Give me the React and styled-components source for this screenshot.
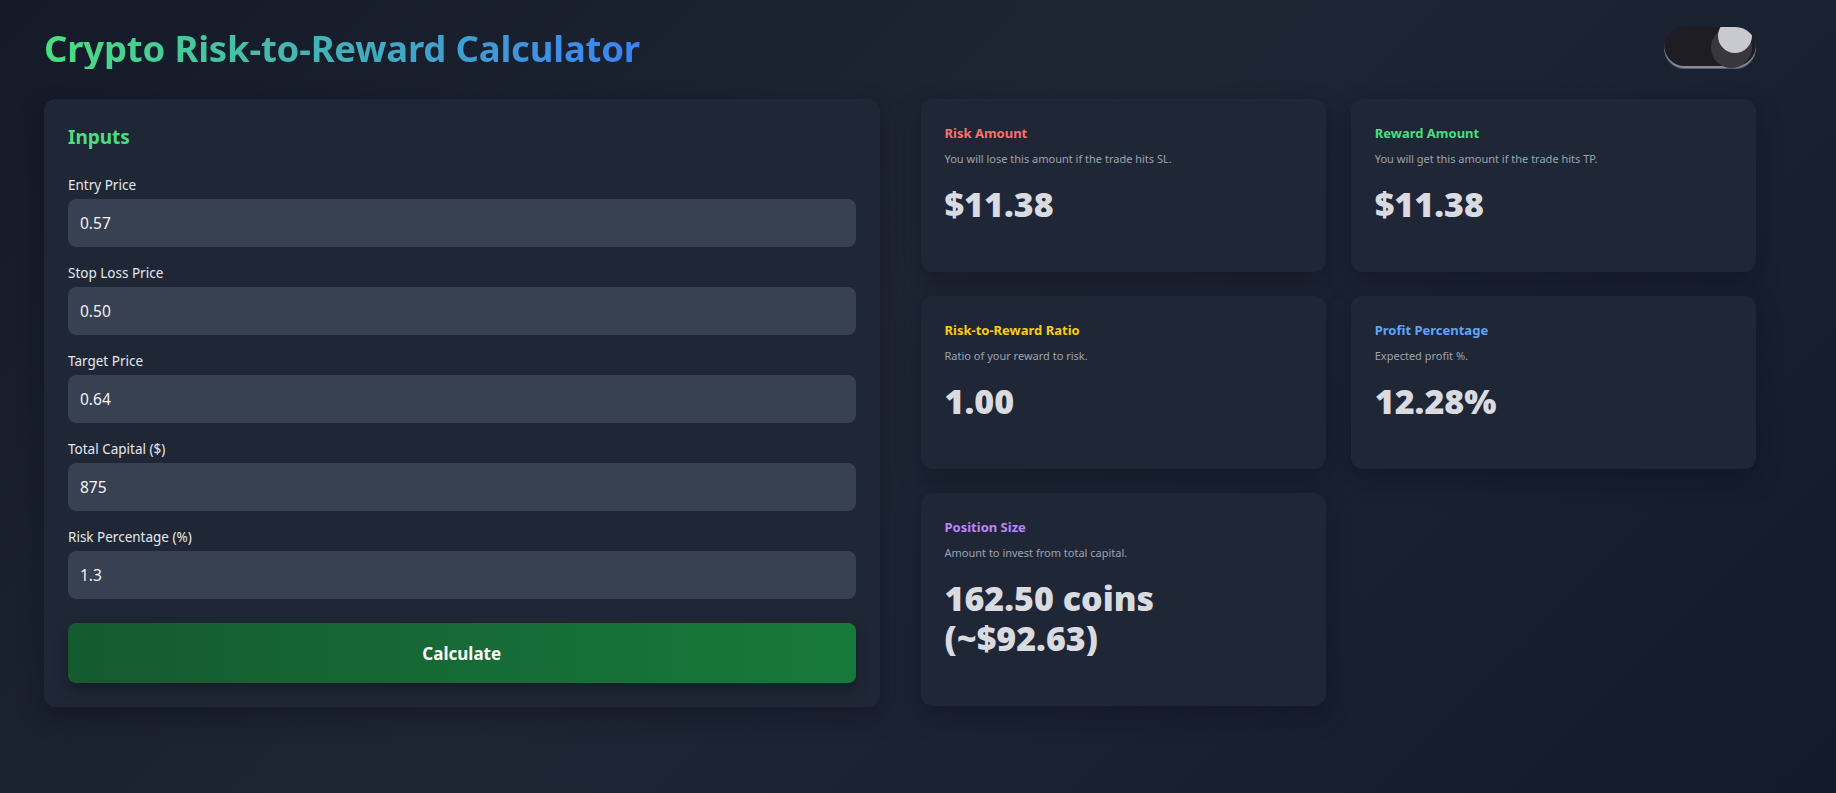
import React, { useState } from 'react';
import styled, { createGlobalStyle } from 'styled-components';

const GlobalStyle = createGlobalStyle`
  * { box-sizing: border-box; }
  body {
    margin: 0;
    font-family: "Noto Sans", "Open Sans", sans-serif;
    background: linear-gradient(135deg, #141a28 0%, #1e2533 45%, #1b2232 65%, #121a2b 100%);
    min-height: 100vh;
    color: #e5e7eb;
  }
`;

const Page = styled.div`
  min-height: 793px;
  padding: 27px 80px 40px 44px;
`;

const Header = styled.header`
  display: flex;
  justify-content: space-between;
  align-items: flex-start;
  margin-bottom: 30px;
`;

const Title = styled.h1`
  margin: 1px 0 0;
  font-size: 36.5px;
  line-height: 41px;
  font-weight: 700;
  background: linear-gradient(90deg, #4ade80 0%, #3b82f6 100%);
  -webkit-background-clip: text;
  background-clip: text;
  color: transparent;
  letter-spacing: -0.2px;
`;

const Toggle = styled.button`
  position: relative;
  width: 92px;
  height: 41px;
  border: none;
  padding: 0;
  border-radius: 999px;
  background: #1f1d24;
  box-shadow: inset 0 -2px 0 #8a8d96, 0 1px 0 #5b5e66;
  cursor: pointer;
  overflow: hidden;
`;

const Halo = styled.span`
  position: absolute;
  top: 0;
  right: ${p => (p.$on ? '4px' : '47px')};
  width: 41px;
  height: 41px;
  border-radius: 50%;
  background: #37373d;
`;

const Knob = styled.span`
  position: absolute;
  top: -8px;
  right: ${p => (p.$on ? '4px' : '54px')};
  width: 34px;
  height: 34px;
  border-radius: 50%;
  background: #c9cacf;
`;

const Main = styled.main`
  display: grid;
  grid-template-columns: 1fr 1fr;
  gap: 41px;
  align-items: start;
`;

const Panel = styled.section`
  background: #1f2736;
  border-radius: 12px;
  padding: 24px;
  box-shadow: 0 10px 25px rgba(8, 12, 22, 0.35);
`;

const PanelTitle = styled.h2`
  margin: 0 0 24px;
  font-size: 19px;
  line-height: 28px;
  font-weight: 700;
  color: #4ade80;
`;

const Field = styled.div`
  display: flex;
  flex-direction: column;
  gap: 4px;
  margin-bottom: 16px;
`;

const Label = styled.label`
  font-size: 13.5px;
  line-height: 20px;
  color: #e5e7eb;
`;

const Input = styled.input`
  height: 48px;
  border: none;
  border-radius: 8px;
  padding: 0 12px;
  background: #374151;
  color: #f3f4f6;
  font-family: inherit;
  font-size: 15.5px;
  outline: none;
`;

const CalcButton = styled.button`
  width: 100%;
  height: 60px;
  margin-top: 8px;
  border: none;
  border-radius: 8px;
  background: linear-gradient(90deg, #155a30 0%, #177a3b 100%);
  color: #ffffff;
  font-family: inherit;
  font-size: 17px;
  font-weight: 700;
  box-shadow: 0 6px 14px rgba(0, 0, 0, 0.3);
  cursor: pointer;
`;

const Results = styled.div`
  display: grid;
  grid-template-columns: 1fr 1fr;
  gap: 24px 25px;
  align-items: start;
`;

const Card = styled.div`
  background: #1f2736;
  border-radius: 12px;
  padding: 24px 24px 48px;
  box-shadow: 0 10px 25px rgba(8, 12, 22, 0.35);
`;

const CardTitle = styled.h3`
  margin: 0 0 8px;
  font-size: 13px;
  line-height: 20px;
  font-weight: 700;
  color: ${p => p.$color};
`;

const CardDesc = styled.p`
  margin: 0 0 17px;
  font-size: 11px;
  line-height: 16px;
  color: #9ca3af;
`;

const CardValue = styled.div`
  font-size: 34px;
  line-height: 40px;
  font-weight: 900;
  color: #d9dbe1;
`;

const fields = [
  { label: 'Entry Price', value: '0.57' },
  { label: 'Stop Loss Price', value: '0.50' },
  { label: 'Target Price', value: '0.64' },
  { label: 'Total Capital ($)', value: '875' },
  { label: 'Risk Percentage (%)', value: '1.3' },
];

const results = [
  { title: 'Risk Amount', color: '#f87171', desc: 'You will lose this amount if the trade hits SL.', value: '$11.38' },
  { title: 'Reward Amount', color: '#4ade80', desc: 'You will get this amount if the trade hits TP.', value: '$11.38' },
  { title: 'Risk-to-Reward Ratio', color: '#facc15', desc: 'Ratio of your reward to risk.', value: '1.00' },
  { title: 'Profit Percentage', color: '#60a5fa', desc: 'Expected profit %.', value: '12.28%' },
  { title: 'Position Size', color: '#c084fc', desc: 'Amount to invest from total capital.', value: '162.50 coins (~$92.63)' },
];

export default function App() {
  const [on, setOn] = useState(true);
  const [values, setValues] = useState(fields.map(f => f.value));

  return (
    <Page>
      <GlobalStyle />
      <Header>
        <Title>Crypto Risk-to-Reward Calculator</Title>
        <Toggle aria-label="Toggle theme" onClick={() => setOn(!on)}>
          <Halo $on={on} />
          <Knob $on={on} />
        </Toggle>
      </Header>
      <Main>
        <Panel>
          <PanelTitle>Inputs</PanelTitle>
          {fields.map((f, i) => (
            <Field key={f.label}>
              <Label>{f.label}</Label>
              <Input
                value={values[i]}
                onChange={e => {
                  const next = [...values];
                  next[i] = e.target.value;
                  setValues(next);
                }}
              />
            </Field>
          ))}
          <CalcButton>Calculate</CalcButton>
        </Panel>
        <Results>
          {results.map(r => (
            <Card key={r.title}>
              <CardTitle $color={r.color}>{r.title}</CardTitle>
              <CardDesc>{r.desc}</CardDesc>
              <CardValue>{r.value}</CardValue>
            </Card>
          ))}
        </Results>
      </Main>
    </Page>
  );
}
